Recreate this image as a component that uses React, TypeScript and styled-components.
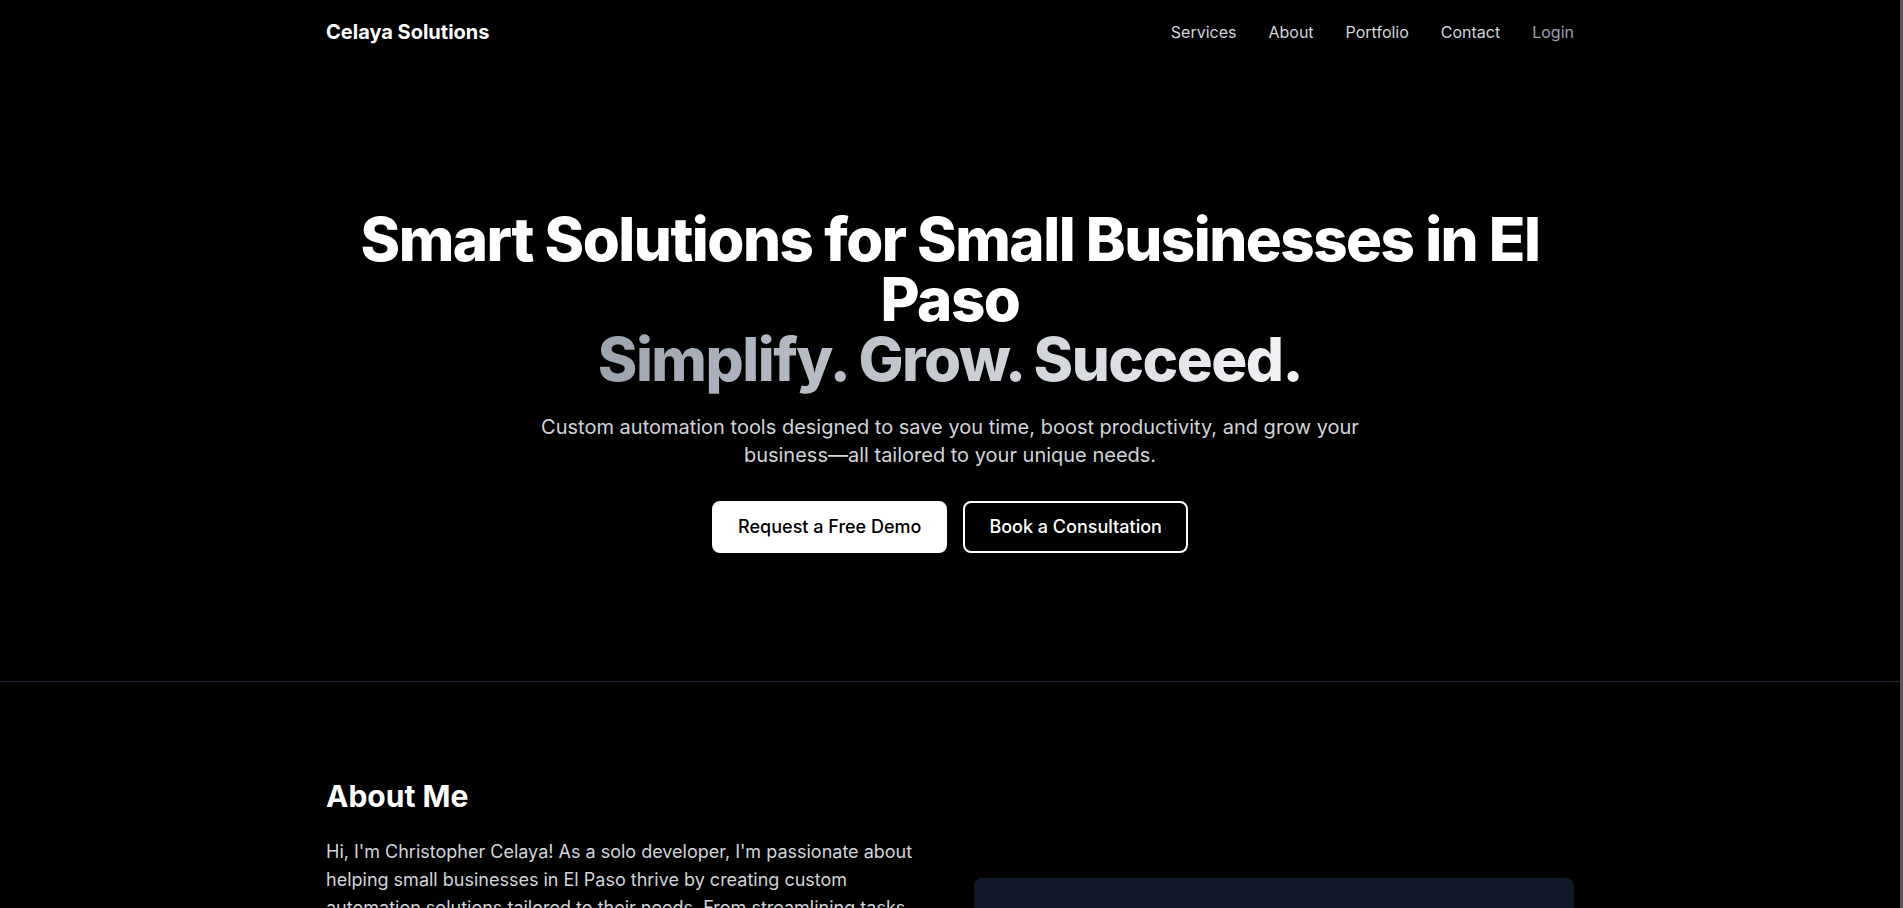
import React, {FC} from 'react';
import styled, {createGlobalStyle} from 'styled-components';

const GlobalStyle = createGlobalStyle`
  html, body {
    margin: 0;
    padding: 0;
    background: #000;
    color: #fff;
    font-family: Inter, "Noto Sans", "Liberation Sans", sans-serif;
  }
  * {
    box-sizing: border-box;
  }
`

// the thin grey strip on the right stands for the browser's scrollbar
const Page = styled.div`
  min-height: 100vh;
  border-right: 3px solid #595959;
`

const Container = styled.div`
  max-width: 1280px;
  margin: 0 auto;
  padding: 0 16px;
`

const Header = styled.header`
  height: 64px;
`

const NavBar = styled(Container)`
  height: 100%;
  display: flex;
  align-items: center;
  justify-content: space-between;
`

const Brand = styled.a`
  font-size: 20px;
  line-height: 28px;
  font-weight: 700;
  color: #fff;
  text-decoration: none;
`

const NavLinks = styled.nav`
  display: flex;
  align-items: center;
  gap: 32px;
`

const NavLink = styled.a<{ $muted?: boolean }>`
  font-size: 16px;
  line-height: 24px;
  color: ${p => p.$muted ? '#9ca3af' : '#d1d5db'};
  text-decoration: none;
`

const Hero = styled.section`
  padding: 145px 0 128px;
  border-bottom: 1px solid #1f2937;
  text-align: center;
`

const Title = styled.h1`
  margin: 0 0 24px;
  font-size: 60px;
  line-height: 60px;
  font-weight: 800;
  letter-spacing: -0.025em;
  color: #fff;
`

const GradientText = styled.span`
  background: linear-gradient(to right, #9ca3af, #f3f4f6);
  -webkit-background-clip: text;
  background-clip: text;
  color: transparent;
`

const Lead = styled.p`
  max-width: 896px;
  margin: 0 auto 32px;
  font-size: 20px;
  line-height: 28px;
  color: #d1d5db;
`

const Actions = styled.div`
  display: flex;
  justify-content: center;
  gap: 16px;
`

const ActionButton = styled.a<{ $primary?: boolean }>`
  display: inline-block;
  padding: 10px 24px;
  border: 2px solid #fff;
  border-radius: 8px;
  font-size: 18px;
  line-height: 28px;
  font-weight: 500;
  text-decoration: none;
  background: ${p => p.$primary ? '#fff' : '#000'};
  color: ${p => p.$primary ? '#000' : '#fff'};
`

const About = styled.section`
  padding: 96px 0;
`

const AboutGrid = styled(Container)`
  display: grid;
  grid-template-columns: 1fr 1fr;
  gap: 48px;
  align-items: start;
`

const SectionTitle = styled.h2`
  margin: 0 0 24px;
  font-size: 30px;
  line-height: 36px;
  font-weight: 700;
  color: #fff;
`

const Body = styled.p`
  margin: 0 0 16px;
  font-size: 18px;
  line-height: 28px;
  color: #d1d5db;
`

const ProfileCard = styled.div`
  margin-top: 100px;
  height: 360px;
  background: #111827;
  border-radius: 8px;
`

const links = ['Services', 'About', 'Portfolio', 'Contact']

const App: FC = () => {
    return (
        <Page>
            <GlobalStyle/>
            <Header>
                <NavBar>
                    <Brand href="#">Celaya Solutions</Brand>
                    <NavLinks>
                        {links.map(link =>
                            <NavLink key={link} href="#">{link}</NavLink>
                        )}
                        <NavLink href="#" $muted>Login</NavLink>
                    </NavLinks>
                </NavBar>
            </Header>
            <Hero>
                <Container>
                    <Title>
                        Smart Solutions for Small Businesses in El Paso
                        <br/>
                        <GradientText>Simplify. Grow. Succeed.</GradientText>
                    </Title>
                    <Lead>
                        Custom automation tools designed to save you time, boost productivity, and grow your
                        business—all tailored to your unique needs.
                    </Lead>
                    <Actions>
                        <ActionButton href="#" $primary>Request a Free Demo</ActionButton>
                        <ActionButton href="#">Book a Consultation</ActionButton>
                    </Actions>
                </Container>
            </Hero>
            <About>
                <AboutGrid>
                    <div>
                        <SectionTitle>About Me</SectionTitle>
                        <Body>
                            Hi, I'm Christopher Celaya! As a solo developer, I'm passionate about helping small
                            businesses in El Paso thrive by creating custom automation solutions tailored to their
                            needs. From streamlining tasks to boosting efficiency, I build tools that let you focus
                            on what matters most: growing your business.
                        </Body>
                        <Body>
                            Every project starts with listening. I take the time to understand how your business
                            works, then design simple, reliable software that fits the way you already do things.
                        </Body>
                    </div>
                    <ProfileCard/>
                </AboutGrid>
            </About>
        </Page>
    );
};

export default App;
